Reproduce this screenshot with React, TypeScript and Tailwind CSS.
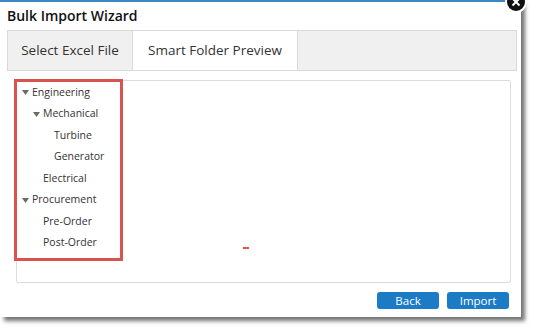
import React from "react";

type Node = { label: string; depth: number; open?: boolean };

const tree: Node[] = [
  { label: "Engineering", depth: 0, open: true },
  { label: "Mechanical", depth: 1, open: true },
  { label: "Turbine", depth: 2 },
  { label: "Generator", depth: 2 },
  { label: "Electrical", depth: 1 },
  { label: "Procurement", depth: 0, open: true },
  { label: "Pre-Order", depth: 1 },
  { label: "Post-Order", depth: 1 },
];

const indent = ["pl-[15px]", "pl-[26px]", "pl-[37px]"];

const Caret = () => (
  <svg width="7" height="5" viewBox="0 0 7 5" className="mr-[3px] shrink-0">
    <path d="M0 0h7L3.5 5z" fill="#6b6b6b" />
  </svg>
);

const TreeRow: React.FC<{ node: Node }> = ({ node }) => (
  <div className={`flex items-center h-[21.5px] ${indent[node.depth]}`}>
    {node.open ? (
      <span className="flex items-center -ml-[10px]">
        <Caret />
      </span>
    ) : null}
    <span className="text-[10.5px] text-[#333]">{node.label}</span>
  </div>
);

export default function App() {
  return (
    <div
      className="relative w-[538px] h-[331px] bg-white overflow-hidden"
      style={{ fontFamily: '"Open Sans", "Liberation Sans", sans-serif' }}
    >
      {/* dialog window */}
      <div className="relative w-[521px] h-[317px] bg-white border-t-[2px] border-[#3d86c2] shadow-[4px_4px_4px_rgba(0,0,0,0.55)] flex flex-col pl-[7px]">
        <div className="h-[28px] pt-[4px] text-[14px] font-semibold text-[#111] leading-[20px]">
          Bulk Import Wizard
        </div>

        {/* tabs */}
        <div className="flex h-[41px] w-[510px] border border-[#d9d9d9] bg-[#f0f0f0] text-[13.5px] text-[#333]">
          <div className="w-[124px] flex items-center justify-center">
            Select Excel File
          </div>
          <div className="w-[166px] flex items-center justify-center bg-white border-x border-[#d9d9d9]">
            Smart Folder Preview
          </div>
          <div className="flex-1" />
        </div>

        {/* preview panel */}
        <div className="relative ml-[9px] mt-[9px] w-[495px] h-[203px] border border-[#dcdcdc] rounded-[2px]">
          <div className="absolute -left-[3px] -top-[2px] w-[109px] h-[182px] border-[3px] border-[#d9534f]">
            {tree.map((n) => (
              <TreeRow key={n.label} node={n} />
            ))}
          </div>
          <div className="absolute left-[226px] top-[166px] w-[6px] h-[2px] bg-[#d9534f]" />
        </div>

        {/* buttons */}
        <div className="flex justify-end gap-[8px] w-[502px] mt-[9px]">
          <button className="w-[62px] h-[17px] rounded-[3px] bg-[#1b7bc4] text-white text-[11.5px] leading-[17px]">
            Back
          </button>
          <button className="w-[62px] h-[17px] rounded-[3px] bg-[#1b7bc4] text-white text-[11.5px] leading-[17px]">
            Import
          </button>
        </div>

        {/* close button */}
        <svg
          className="absolute left-[505px] -top-[11px]"
          width="22"
          height="22"
          viewBox="0 0 22 22"
        >
          <circle cx="11" cy="11" r="10" fill="#111" stroke="#fff" strokeWidth="2" />
          <path d="M7.5 7.5l7 7M14.5 7.5l-7 7" stroke="#fff" strokeWidth="2" />
        </svg>
      </div>
    </div>
  );
}
